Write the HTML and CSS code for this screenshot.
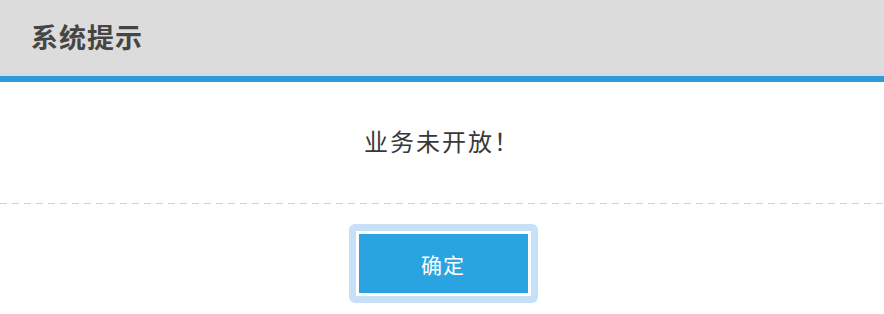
FILE: index.html
```html
<!DOCTYPE html>
<html lang="zh-CN">
<head>
    <meta charset="UTF-8">
    <meta name="viewport" content="width=device-width, initial-scale=1.0">
    <title>系统提示</title>
    <link rel="stylesheet" href="styles.css">
</head>
<body>
    <div class="dialog">
        <div class="dialog-head"><h1>系统提示</h1></div>
        <div class="dialog-bar"></div>
        <div class="dialog-body">业务未开放！</div>
        <div class="dialog-sep"></div>
        <div class="dialog-foot">
            <button type="button" class="ok-btn"><span class="ok-inner">确定</span></button>
        </div>
    </div>
</body>
</html>
```

FILE: styles.css
```css
* {
    box-sizing: border-box;
}
body {
    margin: 0;
    background-color: #fff;
    font-family: "Noto Sans CJK SC", "Noto Sans", sans-serif;
}
.dialog-head {
    height: 76px;
    background-color: #dcdcdc;
    border-bottom: 3px solid #cfdde8;
    padding-left: 31px;
    display: flex;
    align-items: center;
}
.dialog-head h1 {
    margin: 0;
    font-size: 27px;
    font-weight: bold;
    color: #454545;
    letter-spacing: 1px;
    line-height: 1;
}
.dialog-bar {
    height: 6px;
    background-color: #2e9ad6;
}
.dialog-body {
    height: 121px;
    padding-bottom: 4px;
    display: flex;
    align-items: center;
    justify-content: center;
    font-size: 24px;
    color: #383838;
    letter-spacing: 2px;
}
.dialog-sep {
    height: 1px;
    background-image: repeating-linear-gradient(to right, #cfcfcf 0, #cfcfcf 7px, transparent 7px, transparent 12px);
}
.dialog-foot {
    display: flex;
    justify-content: center;
    padding-top: 20px;
}
.ok-btn {
    margin-left: 2px;
    border: 7px solid #c6e0f7;
    border-radius: 6px;
    padding: 3px;
    background-color: #fff;
    font-family: inherit;
    cursor: pointer;
}
.ok-inner {
    display: flex;
    align-items: center;
    justify-content: center;
    width: 169px;
    height: 59px;
    background-color: #2aa3e1;
    color: #fff;
    font-size: 21px;
    letter-spacing: 1px;
}
```
